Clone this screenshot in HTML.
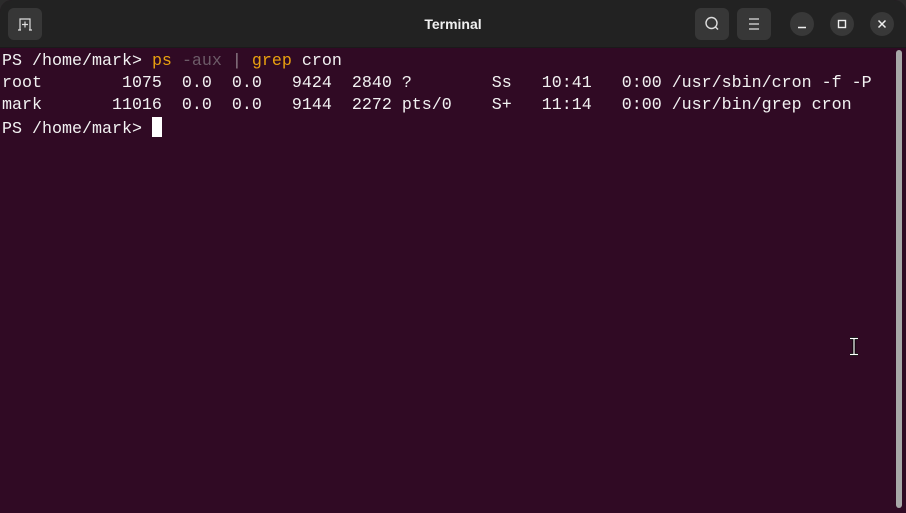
<!DOCTYPE html>
<html><head><style>
html,body{margin:0;padding:0;width:906px;height:513px;overflow:hidden;background:#2b2b2b;}
.win{position:absolute;left:0;top:0;width:906px;height:513px;background:#300a24;border-radius:12px 12px 0 0;overflow:hidden;}
.hdr{position:absolute;left:0;top:0;width:906px;height:47px;background:#222222;border-bottom:1px solid #1a1a1a;}
.title{position:absolute;left:0;width:906px;top:16px;text-align:center;color:#f0f0f0;font:bold 14px "Liberation Sans",sans-serif;}
.btn{position:absolute;top:8px;width:34px;height:32px;background:#373737;border-radius:6px;}
.cb{position:absolute;top:12px;width:24px;height:24px;background:#383838;border-radius:50%;}
.term{position:absolute;left:2px;top:51px;font:16.67px/22px "Liberation Mono",monospace;color:#f2f2f2;white-space:pre;}
.o{color:#e9a10f}.g{color:#6d5b68}.p{color:#8d7d88}
.cur{display:inline-block;width:10px;height:20px;background:#fff;vertical-align:-4px;}
.sb{position:absolute;left:896px;top:50px;width:6px;height:458px;background:#a8a8a8;border-radius:3px;}
</style></head><body>
<div class="win">
<div class="hdr">
<div class="btn" style="left:8px"><svg width="34" height="32"><path d="M12 22V11h10v11M17 13.5v6M14 16.5h6M10 22h3M21 22h3" stroke="#ddd" stroke-width="1.2" fill="none"/></svg></div>
<div class="title">Terminal</div>
<div class="btn" style="left:695px"><svg width="34" height="32"><circle cx="16.5" cy="15" r="5.5" stroke="#ddd" stroke-width="1.4" fill="none"/><path d="M20.5 19l2.5 2.5" stroke="#ddd" stroke-width="1.4"/></svg></div>
<div class="btn" style="left:737px"><svg width="34" height="32"><path d="M12 11h10M12 16h10M12 21h10" stroke="#ddd" stroke-width="1.3"/></svg></div>
<div class="cb" style="left:790px"><svg width="24" height="24"><path d="M8 15.5h8" stroke="#eee" stroke-width="1.5"/></svg></div>
<div class="cb" style="left:830px"><svg width="24" height="24"><rect x="8.5" y="8.5" width="7" height="7" stroke="#eee" stroke-width="1.4" fill="none"/></svg></div>
<div class="cb" style="left:870px"><svg width="24" height="24"><path d="M8.5 8.5l7 7M15.5 8.5l-7 7" stroke="#eee" stroke-width="1.5"/></svg></div>
</div>
<div class="term">PS /home/mark&gt; <span class="o">ps</span> <span class="g">-aux</span> <span class="p">|</span> <span class="o">grep</span> cron
root        1075  0.0  0.0   9424  2840 ?        Ss   10:41   0:00 /usr/sbin/cron -f -P
mark       11016  0.0  0.0   9144  2272 pts/0    S+   11:14   0:00 /usr/bin/grep cron
PS /home/mark&gt; <span class="cur"></span></div>
<svg style="position:absolute;left:848px;top:337px" width="12" height="20"><path d="M2 1.5h8M2 17.5h8M6 1.5v16" stroke="#000" stroke-width="3"/><path d="M2 1.5h8M2 17.5h8M6 1.5v16" stroke="#fff" stroke-width="1.2"/></svg>
<div class="sb"></div>
</div>
</body></html>
